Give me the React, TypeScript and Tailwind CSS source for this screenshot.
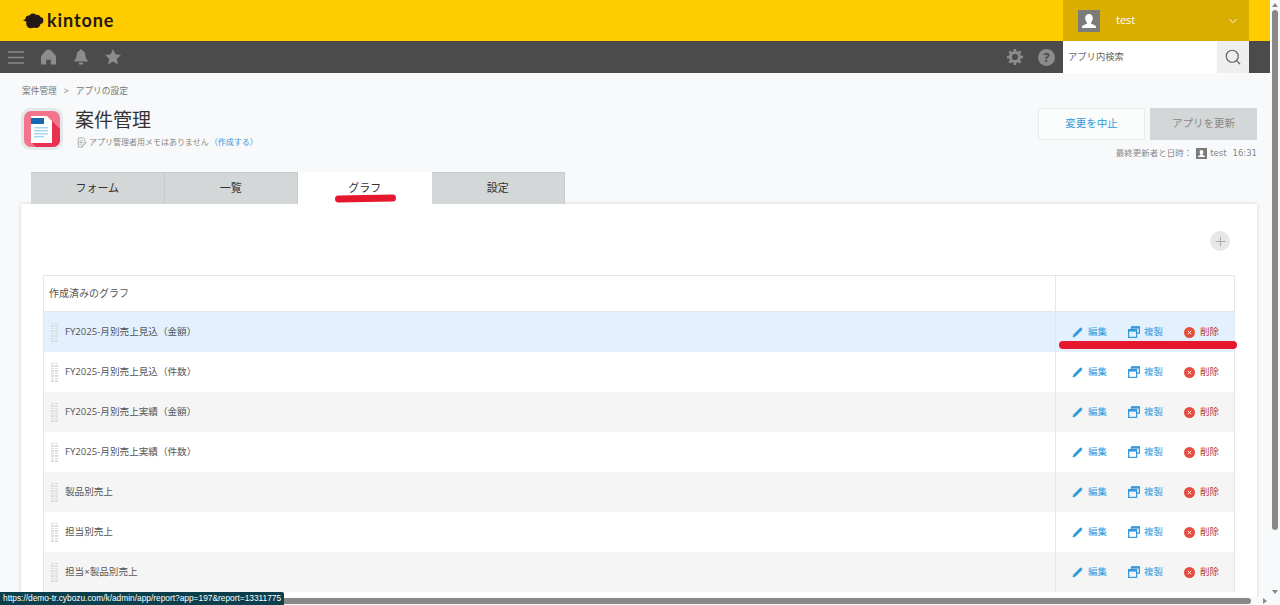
import React from 'react';
import { ChevronDown, Search, Plus, Pencil } from 'lucide-react';

const rows = [
  'FY2025-月別売上見込（金額）',
  'FY2025-月別売上見込（件数）',
  'FY2025-月別売上実績（金額）',
  'FY2025-月別売上実績（件数）',
  '製品別売上',
  '担当別売上',
  '担当×製品別売上',
];

const tabs = ['フォーム', '一覧', 'グラフ', '設定'];

const UserIcon = ({ className }: { className: string }) => (
  <svg viewBox="0 0 22 22" className={className}>
    <rect width="22" height="22" fill="#7b7b7b" />
    <path d="M11 4c2.400 0 3.800 1.800 3.800 4.200 0 1.700-.8 3.200-1.700 4.100v1.500c1 .6 4.200 1.300 4.900 2.700v1.500H4v-1.500c.7-1.400 3.900-2.100 4.900-2.700v-1.500C8 11.400 7.200 9.900 7.200 8.200 7.200 5.800 8.600 4 11 4z" fill="#fff" />
  </svg>
);

const Logo = () => (
  <svg viewBox="0 0 21 16" className="w-[21px] h-[16px]" fill="#231815">
    <path d="M0 7.500L3.500 5.500 5 9z" />
    <circle cx="6" cy="6" r="3.600" />
    <circle cx="10" cy="4.200" r="3.700" />
    <circle cx="14" cy="5.200" r="3.500" />
    <circle cx="17" cy="7.500" r="3.400" />
    <circle cx="13" cy="10.500" r="4.500" />
    <circle cx="8" cy="10.500" r="4.800" />
  </svg>
);

const AppIcon = () => (
  <div className="w-[42px] h-[42px] mt-[6px] rounded-[9px] bg-[#e4e8ea] p-[3px]">
    <svg viewBox="0 0 36 36" className="w-[36px] h-[36px]">
      <rect width="36" height="36" rx="7" fill="#f2758c" />
      <path d="M23 5 L36 18 V29 a7 7 0 0 1 -7 7 H12 L7 31z" fill="#e8304f" />
      <path d="M7 5h16l5 5v22H7z" fill="#fff" />
      <rect x="7" y="7" width="13" height="6" fill="#1467b0" />
      <g fill="#a8d8f0">
        <rect x="10" y="16" width="14" height="1.500" />
        <rect x="10" y="19" width="14" height="1.500" />
        <rect x="10" y="22" width="14" height="1.500" />
        <rect x="10" y="25" width="10" height="1.500" />
      </g>
    </svg>
  </div>
);

const CopyIcon = () => (
  <svg viewBox="0 0 12 12" className="w-[12px] h-[12px]" fill="none" stroke="#3498db" strokeWidth="1.200">
    <path d="M3.500 3.200V.8h7.900v6.400H8.800" />
    <rect x="3.500" y=".6" width="8" height="2" fill="#3498db" stroke="none" />
    <rect x=".6" y="3.600" width="8" height="7.800" />
    <rect x=".6" y="3.600" width="8" height="2" fill="#3498db" stroke="none" />
  </svg>
);

const DeleteIcon = () => (
  <svg viewBox="0 0 12 12" className="w-[11px] h-[11px]">
    <circle cx="6" cy="6" r="6" fill="#e74c3c" />
    <path d="M4.200 4.200l3.600 3.600M7.800 4.200L4.200 7.800" stroke="#fff" strokeWidth="1" />
  </svg>
);

const DragHandle = () => (
  <div className="grid grid-cols-2 gap-x-[1px] gap-y-[1px] w-[7px] shrink-0">
    {Array.from({ length: 16 }).map((_, i) => (
      <span key={i} className="w-[3px] h-[1.500px] bg-[#dcdcdc]" />
    ))}
  </div>
);

export default function App() {
  return (
    <div className="relative flex w-[1280px] h-[605px] overflow-hidden bg-[#f7f9fa] text-[#333] font-['Open_Sans','Noto_Sans_CJK_JP',sans-serif]">
      <div className="flex flex-col w-[1270px] shrink-0">
        {/* top bar */}
        <div className="flex h-[41px] shrink-0 bg-[#ffcc00] pr-[21px]">
          <div className="flex items-center gap-[3px] pl-[23px] flex-1">
            <Logo />
            <span className="font-['Lato',sans-serif] font-bold text-[18px] tracking-[.9px] text-[#231815]">kintone</span>
          </div>
          <div className="flex items-center w-[186px] bg-[#d9ae00] pl-[15px] pr-[9px]">
            <UserIcon className="w-[22px] h-[22px]" />
            <span className="ml-[16px] text-[11px] text-white flex-1">test</span>
            <ChevronDown className="w-[14px] h-[14px] text-white" strokeWidth={1.500} />
          </div>
        </div>

        {/* nav bar */}
        <div className="flex h-[32px] shrink-0 bg-[#4b4b4b] pr-[21px]">
          <div className="flex items-center flex-1 pl-[8px]">
            <svg viewBox="0 0 16 13" className="w-[16px] h-[13px]" stroke="#8c8c8c" strokeWidth="1.400">
              <path d="M0 1h16M0 6.500h16M0 12h16" />
            </svg>
            <svg viewBox="0 0 16 16" className="ml-[17px] w-[15px] h-[16px]" fill="#8c8c8c">
              <path d="M8 0c2 0 3 1 4 2.500l4 4.500v9h-5.500v-5h-5v5H0V7l4-4.500C5 1 6 0 8 0z" />
            </svg>
            <svg viewBox="0 0 16 18" className="ml-[18px] w-[14px] h-[16px]" fill="#8c8c8c">
              <path d="M8 0c1 0 1.500.7 1.500 1.500C12 2.300 13 4.500 13 7c0 3 1.500 5 3 6.500V14H0v-.5C1.500 12 3 10 3 7c0-2.500 1-4.700 3.500-5.500C6.500.7 7 0 8 0z" />
              <rect x="5.500" y="15.200" width="5" height="2.500" rx="1" />
            </svg>
            <svg viewBox="0 0 16 16" className="ml-[17px] w-[16px] h-[16px]" fill="#8c8c8c">
              <path d="M8 0l2.400 5.300 5.600.6-4.200 3.800 1.200 5.700L8 12.500 3 15.400l1.200-5.700L0 5.900l5.600-.6z" />
            </svg>
          </div>
          <div className="flex items-center gap-[15px] pr-[8px]">
            <svg viewBox="0 0 16 16" className="w-[16px] h-[16px]">
              <circle cx="8" cy="8" r="4.600" fill="none" stroke="#8c8c8c" strokeWidth="3" />
              <path d="M8 0v3M8 13v3M0 8h3M13 8h3M2.300 2.300l2.200 2.200M11.500 11.500l2.200 2.200M2.300 13.700l2.200-2.200M11.500 4.500l2.200-2.200" stroke="#8c8c8c" strokeWidth="2.600" />
            </svg>
            <div className="flex items-center justify-center w-[17px] h-[17px] rounded-full bg-[#8c8c8c] text-[#4b4b4b] text-[13px] font-bold leading-none">?</div>
          </div>
          <div className="flex items-center w-[154px] bg-white pl-[5px] text-[9.300px] text-[#666]">アプリ内検索</div>
          <div className="flex items-center justify-center w-[32px] bg-[#eeeeee]">
            <Search className="w-[18px] h-[18px] text-[#666]" strokeWidth={1.600} />
          </div>
        </div>

        <div className="relative flex-1 min-h-0 overflow-hidden">
          {/* breadcrumb */}
          <div className="flex pl-[22px] pt-[13px] gap-[7px] h-[29px] text-[8.700px] text-[#777] leading-[11px]">
            <span>案件管理</span>
            <span>&gt;</span>
            <span>アプリの設定</span>
          </div>

          {/* app head */}
          <div className="flex h-[70px] pl-[21px] pr-[13px]">
            <AppIcon />
            <div className="ml-[12px] flex-1">
              <div className="text-[19px] leading-[24px] pt-[6px] h-[31px] text-[#333]">案件管理</div>
              <div className="flex items-center mt-[3px] text-[8px] leading-[12px] text-[#888]">
                <svg viewBox="0 0 12 12" className="w-[10px] h-[11px] ml-[2px] mr-[2px]" fill="none" stroke="#999" strokeWidth=".9">
                  <path d="M7 11.500H1.500V.5h6l2 2v3M3 4h4M3 6h4M3 8h2M6 9.500l4-4 1 1-4 4H6z" />
                </svg>
                <span>アプリ管理者用メモはありません</span>
                <span className="text-[#3498db] ml-[1px]">（作成する）</span>
              </div>
            </div>
            <div className="flex flex-col items-end pt-[6px]">
              <div className="flex gap-[5px]">
                <button className="w-[107px] h-[32px] bg-[#fbfcfc] border border-[#e9eced] text-[#3498db] text-[10.500px]">変更を中止</button>
                <button className="w-[107px] h-[32px] bg-[#d4d7d7] text-[#888] text-[10.500px]">アプリを更新</button>
              </div>
              <div className="flex items-center mt-[7px] text-[8.500px] text-[#888] leading-[12px]">
                <span>最終更新者と日時：</span>
                <UserIcon className="w-[11px] h-[11px] ml-[4px] mr-[3px]" />
                <span className="font-['DejaVu_Sans',sans-serif]">test</span>
                <span className="ml-[6px] font-['DejaVu_Sans',sans-serif]">16:31</span>
              </div>
            </div>
          </div>

          {/* tabs */}
          <div className="flex pl-[31px] h-[32px]">
            {tabs.map((tab, i) => (
              <div
                key={tab}
                className={
                  i === 2
                    ? 'relative flex items-center justify-center w-[133.500px] bg-white text-[11px] text-[#333]'
                    : 'flex items-center justify-center w-[133.500px] bg-[#d4d7d7] border-t border-r border-[#c8cbcb] text-[11px] text-[#333]'
                }
              >
                {tab}
                {i === 2 && <span className="absolute left-[37px] top-[23px] w-[61px] h-[7px] rounded-full bg-[#e6162d] -rotate-1" />}
              </div>
            ))}
          </div>

          {/* panel */}
          <div className="mx-[21px] w-[1236px] h-[400px] bg-white shadow-[0_0_4px_rgba(0,0,0,0.15)] px-[22px]">
            <div className="flex justify-end items-start h-[71px] pt-[27px] pr-[5px]">
              <div className="flex items-center justify-center w-[20px] h-[20px] rounded-full bg-[#e6e8e8]">
                <Plus className="w-[15px] h-[15px] text-[#a5a8a8]" strokeWidth={1.500} />
              </div>
            </div>
            <div className="relative w-[1192px] border border-[#e3e7e8] border-b-0">
              <div className="flex h-[36px] border-b border-[#e3e7e8]">
                <div className="flex items-center flex-1 pl-[5px] text-[10px] text-[#555]">作成済みのグラフ</div>
                <div className="w-[179px] border-l border-[#e3e7e8]" />
              </div>
              {rows.map((row, i) => (
                <div
                  key={row}
                  className={
                    i === 0
                      ? 'flex h-[40px] bg-[#e2f1fd]'
                      : i % 2 === 0
                        ? 'flex h-[40px] bg-[#f5f5f5]'
                        : 'flex h-[40px] bg-white'
                  }
                >
                  <div className="flex items-center flex-1 pl-[7px] gap-[7px] text-[9.600px] text-[#555]">
                    <DragHandle />
                    <span>{row}</span>
                  </div>
                  <div className="flex items-center w-[179px] border-l border-[#e3e7e8] pl-[16px] text-[9.500px]">
                    <Pencil className="w-[11px] h-[11px] text-[#3498db] fill-[#3498db]" strokeWidth={1} />
                    <span className="ml-[5px] text-[#3498db]">編集</span>
                    <span className="ml-[21px]"><CopyIcon /></span>
                    <span className="ml-[4px] text-[#3498db]">複製</span>
                    <span className="ml-[21px]"><DeleteIcon /></span>
                    <span className="ml-[5px] text-[#c0392b]">削除</span>
                  </div>
                </div>
              ))}
              <span className="absolute left-[1015px] top-[65px] w-[178px] h-[8px] rounded-full bg-[#e6162d]" />
            </div>
          </div>
        </div>
      </div>

      {/* vertical scrollbar */}
      <div className="flex flex-col items-center w-[10px] shrink-0 bg-[#f7f9fa] pt-[3px] pb-[3px]">
        <span className="w-0 h-0 border-x-[3px] border-x-transparent border-b-[4px] border-b-[#888]" />
        <span className="w-[6px] h-[520px] mt-[3px] rounded-full bg-[#888]" />
        <span className="flex-1" />
        <span className="w-0 h-0 border-x-[3px] border-x-transparent border-t-[4px] border-t-[#888] mb-[8px]" />
      </div>

      {/* horizontal scrollbar */}
      <div className="absolute left-0 bottom-0 w-[1270px] h-[8px] flex items-center bg-[#f7f9fa]">
        <span className="w-[1251px] h-[6px] rounded-full bg-[#888]" />
        <span className="ml-[12px] w-0 h-0 border-y-[3px] border-y-transparent border-l-[4px] border-l-[#888]" />
      </div>

      {/* status url */}
      <div className="absolute left-0 bottom-0 h-[13px] px-[3px] flex items-center rounded-tr-[2px] bg-[#0b3f4c] text-[8.350px] text-white font-['Liberation_Sans',sans-serif]">
        https://demo-tr.cybozu.com/k/admin/app/report?app=197&amp;report=13311775
      </div>
    </div>
  );
}
